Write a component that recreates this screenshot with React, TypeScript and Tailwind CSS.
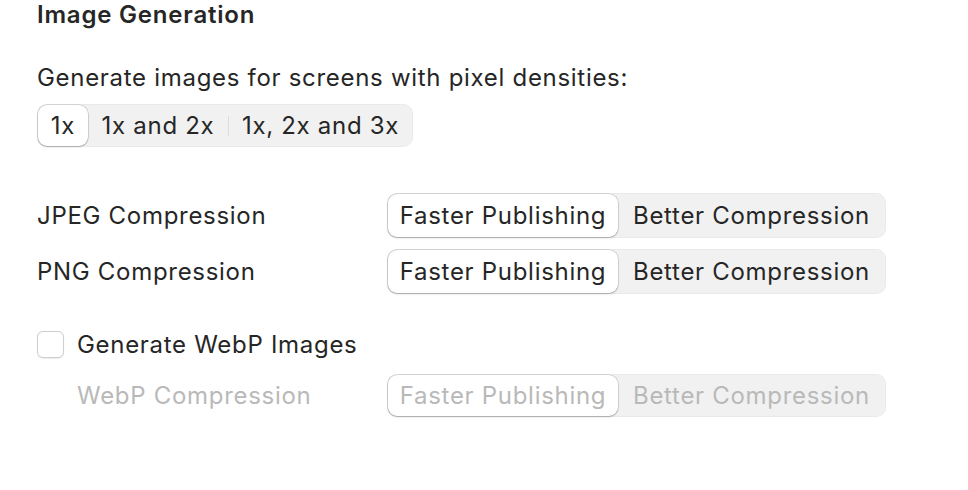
import React from 'react'

const font = { fontFamily: 'Inter, "Noto Sans", sans-serif' }

function Segmented({ items, widths, selected, disabled = false, height = 'h-[45px]' }: { items: string[]; widths: string[]; selected: number; disabled?: boolean; height?: string }) {
  return (
    <div className={`flex items-center ${height} rounded-[10px] bg-[#f1f1f1] p-[1px] shadow-[inset_0_0_0_0.5px_rgba(0,0,0,0.06)]`}>
      {items.map((it, i) => {
        const sel = i === selected
        const showSep = !sel && i > 0 && i - 1 !== selected
        return (
          <div key={it} className="flex h-full items-center">
            {showSep && <div className="h-[20px] w-px bg-[#dcdcdc]" />}
            <div
              className={`${widths[i]} flex h-full items-center justify-center rounded-[9px] text-[24px] leading-[29px] tracking-[0.7px] ${
                sel ? 'bg-white shadow-[0_0_0_0.5px_rgba(0,0,0,0.18),0_1px_2px_rgba(0,0,0,0.22)]' : ''
              } ${disabled ? 'text-[#b9b9b9]' : 'text-[#262626]'}`}
            >
              {it}
            </div>
          </div>
        )
      })}
    </div>
  )
}

export default function App() {
  return (
    <div className="h-[490px] w-[968px] bg-white pl-[37px] text-[#262626]" style={font}>
      <div className="text-[24px] font-semibold leading-[29px] tracking-[0.8px]">Image Generation</div>
      <div className="mt-[36px] flex h-[25px] items-center text-[24px] leading-[29px] tracking-[0.7px]">Generate images for screens with pixel densities:</div>
      <div className="mt-[14px] inline-flex">
        <Segmented items={['1x', '1x and 2x', '1x, 2x and 3x']} widths={['w-[50px]', 'w-[140px]', 'w-[183px]']} selected={0} height="h-[43px]" />
      </div>

      <div className="mt-[46px] flex items-center">
        <div className="w-[350px] text-[24px] leading-[29px] tracking-[0.7px]">JPEG Compression</div>
        <Segmented items={['Faster Publishing', 'Better Compression']} widths={['w-[230px]', 'w-[267px]']} selected={0} />
      </div>
      <div className="mt-[11px] flex items-center">
        <div className="w-[350px] text-[24px] leading-[29px] tracking-[0.7px]">PNG Compression</div>
        <Segmented items={['Faster Publishing', 'Better Compression']} widths={['w-[230px]', 'w-[267px]']} selected={0} />
      </div>

      <div className="mt-[35px] flex h-[30px] items-center">
        <div className="h-[27px] w-[27px] rounded-[6px] border border-[#cfcfcf] bg-white shadow-[0_0.5px_1px_rgba(0,0,0,0.08)]" />
        <div className="ml-[13px] text-[24px] leading-[29px] tracking-[0.7px]">Generate WebP Images</div>
      </div>
      <div className="mt-[15px] flex items-center">
        <div className="w-[350px] pl-[40px] text-[24px] leading-[29px] tracking-[0.7px] text-[#b9b9b9]">WebP Compression</div>
        <Segmented items={['Faster Publishing', 'Better Compression']} widths={['w-[230px]', 'w-[267px]']} selected={0} disabled height="h-[43px]" />
      </div>
    </div>
  )
}
